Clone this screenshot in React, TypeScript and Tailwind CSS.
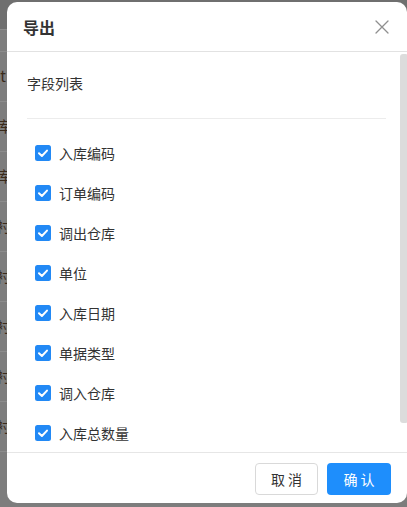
const fields = ["入库编码", "订单编码", "调出仓库", "单位", "入库日期", "单据类型", "调入仓库", "入库总数量"]
const bgRows = ["it", "库", "库", "衬", "衬", "衬", "衬", "衬"]

function CheckIcon() {
  return (
    <svg viewBox="0 0 16 16" className="h-4 w-4">
      <rect width="16" height="16" rx="2.5" fill="#2289f5" />
      <path d="M4 8.2 L6.9 11 L12 5.6" fill="none" stroke="#fff" strokeWidth="2" strokeLinecap="round" strokeLinejoin="round" />
    </svg>
  )
}

function CloseIcon() {
  return (
    <svg viewBox="0 0 14 14" className="h-[14px] w-[14px]">
      <path d="M1 1 L13 13 M13 1 L1 13" stroke="#8f8f8f" strokeWidth="1.3" strokeLinecap="round" />
    </svg>
  )
}

export default function App() {
  return (
    <div
      className="relative h-[507px] w-[407px] overflow-hidden bg-[#7d7d7d]"
      style={{ fontFamily: '"Noto Sans CJK SC", "Noto Sans", sans-serif' }}
    >
      {/* dimmed page behind the dialog */}
      <div className="flex flex-col">
        <div className="h-[30px] border-b border-[#8c8c8c] bg-[#6f6f6f]" />
        <div className="h-[22px] border-b border-[#8c8c8c]" />
        {bgRows.map((t, i) => (
          <div key={i} className="flex h-[50px] items-center border-b border-[#8c8c8c] text-[15px] text-[#3a2a1a]">
            <span className="-ml-[4px]">{t}</span>
          </div>
        ))}
      </div>

      {/* dialog */}
      <div className="absolute left-[7px] top-[2px] flex h-[501px] w-[400px] flex-col overflow-hidden rounded-[10px] bg-white">
        <div className="flex h-[50px] shrink-0 items-center justify-between border-b border-[#e2e2e2] pl-4 pr-[18px]">
          <span className="text-[16px] font-bold text-[#333]">导出</span>
          <CloseIcon />
        </div>

        <div className="flex min-h-0 flex-1">
          <div className="flex-1 pl-5 pr-[14px] pt-[20px]">
            <div className="text-[14px] leading-[22px] text-[#333]">字段列表</div>
            <div className="mt-[24px] border-t border-[#ececec]" />
            <div className="mt-[14px] flex flex-col">
              {fields.map((f) => (
                <div key={f} className="flex h-[40px] items-center gap-2 pl-2">
                  <CheckIcon />
                  <span className="text-[14px] text-[#333]">{f}</span>
                </div>
              ))}
            </div>
          </div>
          <div className="w-[7px] shrink-0 pt-[2px]">
            <div className="h-[369px] rounded-l-[3px] rounded-r-[1px] bg-[#dcdcdc]" />
          </div>
        </div>

        <div className="flex h-[51px] shrink-0 items-start justify-end gap-[9px] border-t border-[#e6e6e6] pr-4 pt-[10px]">
          <button className="h-[32px] w-[63px] rounded-[4px] border border-[#d9d9d9] bg-white text-[14px] text-[#333]">
            取 消
          </button>
          <button className="h-[32px] w-[64px] rounded-[4px] bg-[#1e8efc] text-[14px] text-white">
            确 认
          </button>
        </div>
      </div>
    </div>
  )
}
